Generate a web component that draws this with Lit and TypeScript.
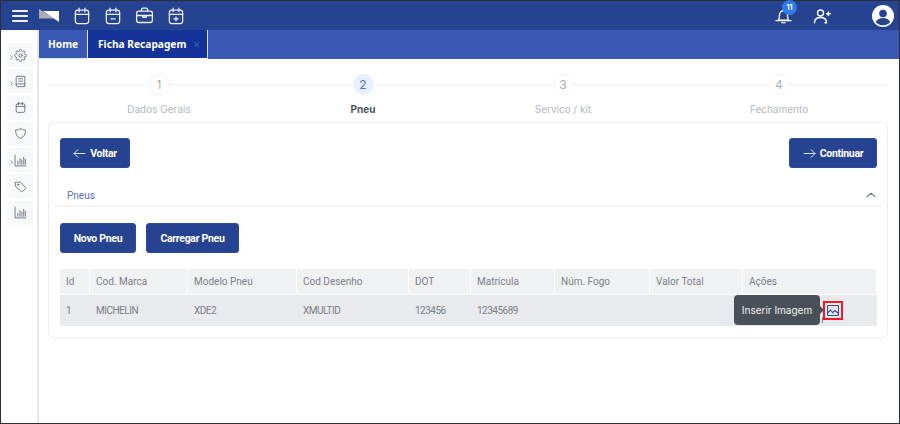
import { LitElement, html, css, svg } from "lit";
import { customElement } from "lit/decorators.js";

const s = (w: number, body: unknown, stroke = "currentColor", sw = 1.5, vb = 24) => html`<svg width=${w} height=${w} viewBox="0 0 ${vb} ${vb}" fill="none" stroke=${stroke} stroke-width=${sw} stroke-linecap="round" stroke-linejoin="round">${body}</svg>`;

const calBase = svg`<rect x="4" y="5" width="16" height="16" rx="3"/><path d="M4 10h16M8.500 2.500v4.500M15.500 2.500v4.500"/>`;
const cal = calBase;
const calMinus = svg`${calBase}<path d="M9.500 15.500h5"/>`;
const calPlus = svg`${calBase}<path d="M9.500 15.500h5M12 13v5"/>`;
const brief = svg`<rect x="3" y="7" width="18" height="13" rx="2.500"/><path d="M8.500 7V5a1.500 1.500 0 0 1 1.500-1.500h4A1.500 1.500 0 0 1 15.500 5v2M3 12h18M10 12v2h4v-2"/>`;
const gear = svg`<circle cx="12" cy="12" r="3"/><path d="M19.4 15a1.65 1.65 0 0 0 .33 1.82l.06.06a2 2 0 0 1 0 2.83 2 2 0 0 1-2.83 0l-.06-.06a1.65 1.65 0 0 0-1.82-.33 1.65 1.65 0 0 0-1 1.51V21a2 2 0 0 1-2 2 2 2 0 0 1-2-2v-.09A1.65 1.65 0 0 0 9 19.4a1.65 1.65 0 0 0-1.82.33l-.06.06a2 2 0 0 1-2.83 0 2 2 0 0 1 0-2.83l.06-.06a1.65 1.65 0 0 0 .33-1.82 1.65 1.65 0 0 0-1.51-1H3a2 2 0 0 1-2-2 2 2 0 0 1 2-2h.09A1.65 1.65 0 0 0 4.6 9a1.65 1.65 0 0 0-.33-1.82l-.06-.06a2 2 0 0 1 0-2.83 2 2 0 0 1 2.83 0l.06.06a1.65 1.65 0 0 0 1.82.33H9a1.65 1.65 0 0 0 1-1.51V3a2 2 0 0 1 2-2 2 2 0 0 1 2 2v.09a1.65 1.65 0 0 0 1 1.51 1.65 1.65 0 0 0 1.82-.33l.06-.06a2 2 0 0 1 2.83 0 2 2 0 0 1 0 2.83l-.06.06a1.65 1.65 0 0 0-.33 1.82V9a1.65 1.65 0 0 0 1.51 1H21a2 2 0 0 1 2 2 2 2 0 0 1-2 2h-.09a1.65 1.65 0 0 0-1.51 1z"/>`;
const book = svg`<path d="M6.500 2.500H20v19H6.500A2.500 2.500 0 0 1 4 19V5a2.500 2.500 0 0 1 2.500-2.500z"/><path d="M4 18.500A2.500 2.500 0 0 1 6.500 16.500H20M8.500 7h7.500M8.500 11.500h7.500"/>`;
const shield = svg`<path d="M12 3c3 1.800 5.500 2.500 9 2.500 0 7-1.500 12.500-9 15.500C4.500 18 3 12.500 3 5.500 6.500 5.500 9 4.800 12 3z"/>`;
const chart = svg`<path d="M2 2v20h20M7 19v-6M11 19V8M14.500 19v-8M18 19V6M21 19v-9"/>`;
const tag = svg`<path d="M3 4h8.500l9.500 9a2 2 0 0 1 0 2.800l-5 5a2 2 0 0 1-2.800 0L3 12z"/><circle cx="7.500" cy="8.500" r="1.200"/>`;

@customElement("app-root")
export class AppRoot extends LitElement {
  static styles = css`
    :host { display: block; width: 900px; height: 424px; overflow: hidden; font-family: "Inter", "Noto Sans", sans-serif; }
    * { box-sizing: border-box; }
    .frame { width: 900px; height: 424px; border: 1px solid #2c2f38; display: flex; flex-direction: column; background: #fff; }
    .top { height: 29px; background: #264391; color: #fff; display: flex; align-items: center; padding-left: 11px; flex: none; }
    .burger { width: 16px; height: 12px; display: flex; flex-direction: column; justify-content: space-between; margin-right: 11px; }
    .burger i { display: block; height: 2px; background: #f1f3fa; border-radius: 1px; }
    .logo { margin-right: 13px; display: block; }
    .ticons { display: flex; gap: 11px; align-items: center; }
    .ticons svg { display: block; }
    .right { margin-left: auto; display: flex; align-items: center; }
    .bell { position: relative; width: 20px; height: 20px; margin-right: 19px; margin-left: -1px; }
    .badge { position: absolute; left: 8px; top: -6px; width: 15px; height: 15px; border-radius: 50%; background: #2f7be8; color: #fff; font-size: 7px; font-weight: 700; display: flex; align-items: center; justify-content: center; }
    .uadd { margin-right: 41px; display: block; }
    .avatar { margin-right: 5px; display: block; }
    .body { flex: 1; display: flex; min-height: 0; }
    .side { width: 38px; flex: none; border-right: 2px solid #e6e8ec; padding: 13px 0 0 6px; display: flex; flex-direction: column; gap: 2.300px; color: #626b77; }
    .sitem { width: 26px; height: 24px; background: #f7f8fa; border-radius: 2px; position: relative; display: flex; align-items: center; justify-content: center; }
    .sitem svg { display: block; }
    .caret { position: absolute; left: 3px; top: 12px; }
    .main { flex: 1; min-width: 0; }
    .tabs { height: 29px; background: #3858b4; display: flex; font-family: "Noto Sans", sans-serif; font-weight: 700; font-size: 10.200px; color: #fff; white-space: nowrap; }
    .tab { display: flex; align-items: center; padding: 0 9px; height: 29px; }
    .tab.home { width: 49px; border-right: 1px solid #dfe4f3; border-bottom: 1px solid #dfe4f3; }
    .tab.active { width: 120px; background: #133399; border-right: 1px solid #dfe4f3; border-bottom: 1px solid #fff; justify-content: space-between; padding: 0 7px 0 10px; }
    .tab.active span { color: #3a63bd; font-weight: 400; font-size: 12px; }
    .steps { display: grid; grid-template-columns: 222px 186px 214px 218px; margin: 15px 0 0 9px; width: 840px; height: 48px; position: relative; }
    .step { display: flex; flex-direction: column; align-items: center; position: relative; font-size: 10px; color: #b3b7bd; }
    .step::before { content: ""; position: absolute; left: 0; right: 0; top: 10px; height: 1px; background: #eff0f2; }
    .num { width: 21px; height: 21px; border-radius: 50%; background: #fff; border: 1px solid #f1f2f4; position: relative; display: flex; align-items: center; justify-content: center; font-size: 12px; color: #a9adb3; }
    .step.on .num { background: #e8f0fd; border-color: #e8f0fd; color: #4f6fd6; }
    .lab { margin-top: 8px; line-height: 13px; }
    .step.on .lab { color: #4c5158; font-weight: 700; }
    .card { margin: 0 0 0 9px; width: 840px; height: 216px; border: 1px solid #eaecef; border-radius: 6px; padding: 15px 0 0 11px; }
    .row { display: flex; justify-content: space-between; padding-right: 10px; }
    .btn { height: 30px; background: #264391; color: #fff; border: 1px solid #2b4a9c; border-radius: 3px; font-family: "Roboto", sans-serif; font-weight: 700; font-size: 10.500px; letter-spacing: -0.300px; display: flex; align-items: center; justify-content: center; gap: 4px; }
    .btn svg { display: block; }
    .acc { margin: 14px 5px 0 -6px; height: 25px; border-bottom: 1px solid #e8eaed; display: flex; justify-content: space-between; align-items: center; padding: 2px 4px 0 13px; font-size: 10px; color: #5b6cc0; font-family: "Roboto", sans-serif; }
    .acc svg { display: block; color: #6f7d8c; }
    .btns { display: flex; gap: 10px; margin-top: 16px; }
    .table { margin-top: 16px; width: 817px; display: grid; grid-template-columns: 30px 98px 109px 112px 62px 84px 95px 93px 134px; font-family: "Roboto", sans-serif; font-size: 10px; color: #7a8088; position: relative; }
    .th { height: 26px; background: #f0f1f3; border-right: 1px solid #fff; border-bottom: 1px solid #fff; display: flex; align-items: center; padding-left: 6px; font-size: 10px; }
    .td { height: 31px; background: #e8eaed; display: flex; align-items: center; padding-left: 6px; letter-spacing: -0.500px; }
    .tip { position: absolute; left: 674px; top: 26px; width: 86px; height: 30px; background: #495057; color: #f1f3f5; border-radius: 4px; font-size: 10px; display: flex; align-items: center; justify-content: center; font-family: "Inter", sans-serif; }
    .tip::after { content: ""; position: absolute; right: -4px; top: 11px; border-left: 4px solid #495057; border-top: 4px solid transparent; border-bottom: 4px solid transparent; }
    .tip::before { content: ""; position: absolute; left: 88px; top: 22px; width: 1px; height: 6px; background: #7a8088; }
    .imgbtn { position: absolute; left: 763px; top: 32px; width: 20px; height: 19px; border: 2px solid #ed1c24; display: flex; align-items: center; justify-content: center; color: #2d4a9e; }
    .imgbtn svg { display: block; }
  `;

  render() {
    const side = [
      [gear, true], [book, true], [cal, false], [shield, false], [chart, true], [tag, false], [chart, false],
    ] as [unknown, boolean][];
    const head = ["Id", "Cod. Marca", "Modelo Pneu", "Cod Desenho", "DOT", "Matrícula", "Núm. Fogo", "Valor Total", "Ações"];
    const row = ["1", "MICHELIN", "XDE2", "XMULTID", "123456", "12345689", "", "", ""];
    const steps = ["Dados Gerais", "Pneu", "Servico / kit", "Fechamento"];
    return html`<div class="frame">
      <div class="top">
        <div class="burger"><i></i><i></i><i></i></div>
        <svg class="logo" width="20" height="13" viewBox="0 0 20 13"><path d="M0 0v9.500h15.500z" fill="#a9adb5"/><path d="M4 2h16v11z" fill="#fff"/></svg>
        <div class="ticons">
          ${s(20, cal, "#eef1f9", 1.500)}${s(20, calMinus, "#eef1f9", 1.500)}${s(21, brief, "#eef1f9", 1.500)}${s(20, calPlus, "#eef1f9", 1.500)}
        </div>
        <div class="right">
          <div class="bell">
            <svg width="19" height="19" viewBox="0 0 24 24" fill="none" stroke="#fff" stroke-width="1.700" stroke-linejoin="round" stroke-linecap="round"><path d="M5.500 18c1.200-1.500 1.500-3.500 1.500-7a5 5 0 0 1 10 0c0 3.500.3 5.500 1.500 7zM2.500 18.500h19M10 21h4"/></svg>
            <div class="badge">11</div>
          </div>
          <svg class="uadd" width="18" height="18" viewBox="0 0 24 24" fill="none" stroke="#fff" stroke-width="1.800" stroke-linecap="round"><circle cx="10" cy="8" r="4"/><path d="M2 21c0-4.500 3.500-7 8-7s8 2.500 8 7h-2M18 9h5M20.500 6.500v5"/></svg>
          <svg class="avatar" width="22" height="22" viewBox="0 0 22 22"><circle cx="11" cy="11" r="11" fill="#fff"/><circle cx="11" cy="8.500" r="3.800" fill="#264391"/><path d="M3.800 17c1.500-3 4-4 7.200-4s5.700 1 7.200 4a9.500 9.500 0 0 1-14.400 0z" fill="#264391"/></svg>
        </div>
      </div>
      <div class="body">
        <div class="side">
          ${side.map(([ic, c]) => html`<div class="sitem">
            ${c ? html`<svg class="caret" width="3" height="5" viewBox="0 0 3 5" fill="none" stroke="#8a93a0"><path d="M.5.500l2 2-2 2"/></svg>` : ""}
            ${s(13, ic, "currentColor", 1.600)}
          </div>`)}
        </div>
        <div class="main">
          <div class="tabs">
            <div class="tab home">Home</div>
            <div class="tab active">Ficha Recapagem<span>×</span></div>
          </div>
          <div class="steps">
            ${steps.map((t, i) => html`<div class="step ${i === 1 ? "on" : ""}"><div class="num">${i + 1}</div><div class="lab">${t}</div></div>`)}
          </div>
          <div class="card">
            <div class="row">
              <div class="btn" style="width:70px">${s(13, svg`<path d="M22 12H2M9 5l-7 7 7 7"/>`, "#fff", 1.600)}Voltar</div>
              <div class="btn" style="width:88px">${s(13, svg`<path d="M2 12h20M15 5l7 7-7 7"/>`, "#fff", 1.600)}Continuar</div>
            </div>
            <div class="acc">Pneus ${s(14, svg`<path d="M5 15l7-6 7 6"/>`, "currentColor", 1.800)}</div>
            <div class="btns">
              <div class="btn" style="width:76px">Novo Pneu</div>
              <div class="btn" style="width:93px">Carregar Pneu</div>
            </div>
            <div class="table">
              ${head.map((h) => html`<div class="th">${h}</div>`)}
              ${row.map((c) => html`<div class="td">${c}</div>`)}
              <div class="tip">Inserir Imagem</div>
              <div class="imgbtn">
                <svg width="12" height="11" viewBox="0 0 12 11" fill="none" stroke="currentColor" stroke-width="1.100"><rect x=".5" y=".5" width="11" height="10" rx="1"/><path d="M.5 8l3-3 3 3.500M6 7l2-1.500 3.500 3"/></svg>
              </div>
            </div>
          </div>
        </div>
      </div>
    </div>`;
  }
}
